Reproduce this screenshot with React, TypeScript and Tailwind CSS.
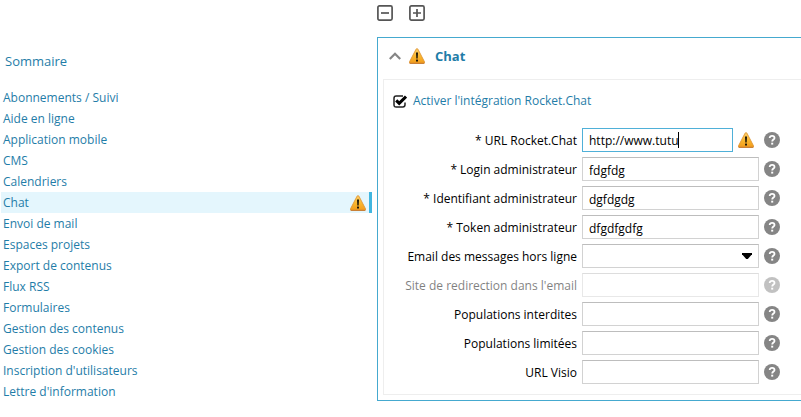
import { useState } from "react"
import clsx from "clsx"

const sections = [
    "Abonnements / Suivi",
    "Aide en ligne",
    "Application mobile",
    "CMS",
    "Calendriers",
    "Chat",
    "Envoi de mail",
    "Espaces projets",
    "Export de contenus",
    "Flux RSS",
    "Formulaires",
    "Gestion des contenus",
    "Gestion des cookies",
    "Inscription d'utilisateurs",
    "Lettre d'information",
]

type Field = {
    id: string
    label: string
    value?: string
    type?: "text" | "select"
    warning?: boolean
    disabled?: boolean
}

const fields: Field[] = [
    { id: "url", label: "* URL Rocket.Chat", value: "http://www.tutu", warning: true },
    { id: "login", label: "* Login administrateur", value: "fdgfdg" },
    { id: "user-id", label: "* Identifiant administrateur", value: "dgfdgdg" },
    { id: "token", label: "* Token administrateur", value: "dfgdfgdfg" },
    { id: "offline-email", label: "Email des messages hors ligne", type: "select" },
    { id: "redirect", label: "Site de redirection dans l'email", disabled: true },
    { id: "denied", label: "Populations interdites" },
    { id: "limited", label: "Populations limitées" },
    { id: "visio", label: "URL Visio" },
]

const WarningIcon = () => (
    <svg className="size-4 shrink-0" viewBox="0 0 16 16" aria-hidden="true">
        <defs>
            <linearGradient id="warning-fill" x1="0" y1="0" x2="0" y2="1">
                <stop offset="0" stopColor="#fbcf6a" />
                <stop offset="0.55" stopColor="#f9b52c" />
                <stop offset="1" stopColor="#f19a1c" />
            </linearGradient>
        </defs>
        <path
            d="M7.1 1.1Q8 0 8.9 1.1L15.5 13.8Q15.9 15.4 14.6 15.5H1.4Q.1 15.4 .5 13.8Z"
            fill="url(#warning-fill)"
            stroke="#dd9233"
            strokeWidth="0.8"
        />
        <path d="M.7 15.3H15.3" stroke="#c27a35" strokeWidth="1" />
        <path d="M7 4.6H9L8.7 10.6H7.3Z" fill="#1d1608" />
        <rect x="7" y="11.6" width="2" height="1.9" fill="#1d1608" />
    </svg>
)

const HelpIcon = () => (
    <svg className="size-4" viewBox="0 0 16 16" aria-hidden="true">
        <circle cx="8" cy="8" r="8" fill="#858585" />
        <path
            d="M5.7 6.1C5.7 4.5 6.7 3.8 8.1 3.8C9.5 3.8 10.5 4.6 10.5 5.9C10.5 7.5 8.2 7.6 8.2 9.5"
            fill="none"
            stroke="#fff"
            strokeWidth="1.8"
        />
        <rect x="7.2" y="10.7" width="2" height="1.9" fill="#fff" />
    </svg>
)

const Sidebar = () => (
    <nav className="w-[372px] shrink-0 pt-[50px] pl-px">
        <h2 className="mb-3.5 pl-1 text-[13px] leading-[23px]">Sommaire</h2>
        <ul>
            {sections.map((section) => (
                <li key={section}>
                    <a
                        href="#"
                        className={clsx(
                            "flex h-[21px] items-center justify-between border-r-3 pr-[3px] pl-0.5",
                            section === "Chat" ? "border-[#41b6e0] bg-[#e4f6fd]" : "border-transparent"
                        )}
                    >
                        {section}
                        {section === "Chat" && <WarningIcon />}
                    </a>
                </li>
            ))}
        </ul>
    </nav>
)

const FieldRow = ({ field }: { field: Field }) => {
    const [value, setValue] = useState(field.value ?? "")

    return (
        <div className={clsx("flex h-6 items-center text-black", field.disabled && "opacity-50")}>
            <label htmlFor={field.id} className="mr-[5px] w-[193px] shrink-0 pt-0.5 text-right">
                {field.label}
            </label>
            <div className="relative flex h-6 min-w-0 flex-1 items-center">
                {field.type === "select" ? (
                    <>
                        <select
                            id={field.id}
                            className="h-6 w-full appearance-none border border-[#d2d2d2] border-t-[#bdbdbd] bg-white px-1.5 outline-none"
                        >
                            <option value=""></option>
                        </select>
                        <svg className="pointer-events-none absolute right-[7px] h-1.5 w-2.5" viewBox="0 0 10 6" aria-hidden="true">
                            <path d="M0 0H10V1.2L5.8 6H4.2L0 1.2Z" fill="#000" />
                        </svg>
                    </>
                ) : (
                    <input
                        id={field.id}
                        type="text"
                        value={value}
                        disabled={field.disabled}
                        onChange={(e) => setValue(e.target.value)}
                        className={clsx(
                            "h-6 w-full min-w-0 border bg-white px-1.5 outline-none",
                            field.warning
                                ? "mr-[5px] border-[#4fb0d8] caret-transparent"
                                : "border-[#d2d2d2] border-t-[#bdbdbd] pt-0.5"
                        )}
                    />
                )}
                {field.warning && (
                    <>
                        {/* text cursor */}
                        <span className="pointer-events-none absolute left-24 h-4 w-px bg-black" />
                        <WarningIcon />
                        <span className="w-[5px] shrink-0" />
                    </>
                )}
            </div>
            <button type="button" aria-label="Aide" className="ml-[5px] shrink-0">
                <HelpIcon />
            </button>
        </div>
    )
}

const ChatPanel = () => (
    <section className="border border-r-0 border-[#45a9cf] pb-[5px] pl-[5px]">
        <header className="flex h-[41px] items-center pb-1.5 pl-1.5">
            <button type="button" aria-label="Replier">
                <svg className="h-2 w-3" viewBox="0 0 12 8" aria-hidden="true">
                    <path d="M.8 7L6 1.8L11.2 7" fill="none" stroke="#858585" strokeWidth="2.2" />
                </svg>
            </button>
            <span className="mr-2.5 ml-2">
                <WarningIcon />
            </span>
            <h3 className="text-[13px] font-bold">Chat</h3>
        </header>
        <div className="border border-r-0 border-[#eeeeee] pt-3 pr-[21px] pb-2.5">
            <label className="mb-[18px] flex h-[18px] items-center gap-1.5 pl-[9px]">
                <input type="checkbox" defaultChecked className="peer sr-only" />
                <svg className="size-3.5 peer-focus-visible:outline" viewBox="0 0 14 14" aria-hidden="true">
                    <path
                        d="M12 8.5V10.8Q12 13 9.8 13H3.2Q1 13 1 10.8V4.2Q1 2 3.2 2H10"
                        fill="none"
                        stroke="#222"
                        strokeWidth="1.5"
                    />
                    <path d="M3.2 6.4L6.2 9.4L13 2.6" fill="none" stroke="#000" strokeWidth="3" />
                </svg>
                Activer l'intégration Rocket.Chat
            </label>
            <div className="flex flex-col gap-[5px]">
                {fields.map((field) => (
                    <FieldRow key={field.id} field={field} />
                ))}
            </div>
        </div>
    </section>
)

export default function App() {
    return (
        <div className="flex bg-white font-['Open_Sans',sans-serif] text-[12px] leading-[18px] text-[#1f7da8]">
            <Sidebar />
            <main className="min-w-0 flex-1 pt-[5px] pl-[5px]">
                <div className="mb-4 flex gap-4">
                    <button type="button" aria-label="Tout replier">
                        <svg className="size-4" viewBox="0 0 16 16" fill="none" stroke="#555" strokeWidth="1.7" aria-hidden="true">
                            <rect x="0.9" y="0.9" width="14.2" height="14.2" rx="1.5" />
                            <path d="M4 8H12" />
                        </svg>
                    </button>
                    <button type="button" aria-label="Tout déplier">
                        <svg className="size-4" viewBox="0 0 16 16" fill="none" stroke="#555" strokeWidth="1.7" aria-hidden="true">
                            <rect x="0.9" y="0.9" width="14.2" height="14.2" rx="1.5" />
                            <path d="M4 8H12M8 4V12" />
                        </svg>
                    </button>
                </div>
                <ChatPanel />
            </main>
        </div>
    )
}
